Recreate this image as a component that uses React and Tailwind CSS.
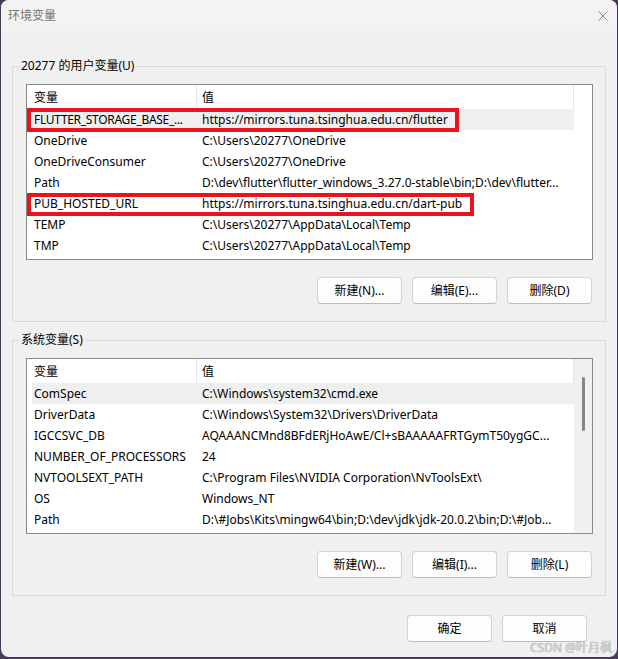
import React from "react";

const userRows = [
  { name: "FLUTTER_STORAGE_BASE_...", value: "https://mirrors.tuna.tsinghua.edu.cn/flutter", hl: true, box: "a", tight: true },
  { name: "OneDrive", value: "C:\\Users\\20277\\OneDrive" },
  { name: "OneDriveConsumer", value: "C:\\Users\\20277\\OneDrive" },
  { name: "Path", value: "D:\\dev\\flutter\\flutter_windows_3.27.0-stable\\bin;D:\\dev\\flutter..." },
  { name: "PUB_HOSTED_URL", value: "https://mirrors.tuna.tsinghua.edu.cn/dart-pub", box: "b" },
  { name: "TEMP", value: "C:\\Users\\20277\\AppData\\Local\\Temp" },
  { name: "TMP", value: "C:\\Users\\20277\\AppData\\Local\\Temp" },
];

const sysRows = [
  { name: "ComSpec", value: "C:\\Windows\\system32\\cmd.exe", hl: true },
  { name: "DriverData", value: "C:\\Windows\\System32\\Drivers\\DriverData" },
  { name: "IGCCSVC_DB", value: "AQAAANCMnd8BFdERjHoAwE/Cl+sBAAAAAFRTGymT50ygGC..." },
  { name: "NUMBER_OF_PROCESSORS", value: "24" },
  { name: "NVTOOLSEXT_PATH", value: "C:\\Program Files\\NVIDIA Corporation\\NvToolsExt\\" },
  { name: "OS", value: "Windows_NT" },
  { name: "Path", value: "D:\\#Jobs\\Kits\\mingw64\\bin;D:\\dev\\jdk\\jdk-20.0.2\\bin;D:\\#Job..." },
];

function Btn({ children }) {
  return (
    <div className="w-[85px] h-[27px] flex items-center justify-center rounded-[4px] border border-[#d3d3d3] border-b-[#bcbcbc] bg-[#fdfdfd] text-black">
      {children}
    </div>
  );
}

function Row({ r }) {
  return (
    <div className="relative h-[21px] pl-[5px] flex">
      <div className={r.hl ? "flex-1 flex items-center pt-px bg-[#efefef]" : "flex-1 flex items-center pt-px"}>
        <div
          className={
            r.tight
              ? "w-[165px] pl-[2px] whitespace-nowrap overflow-hidden tracking-[-0.3px]"
              : "w-[165px] pl-[2px] whitespace-nowrap overflow-hidden"
          }
        >
          {r.name}
        </div>
        <div className="flex-1 pl-[5px] whitespace-nowrap overflow-hidden">{r.value}</div>
      </div>
      {r.box === "a" && (
        <div className="absolute left-0 -top-px w-[432px] h-[24px] border-[4px] border-[#e8131f]" />
      )}
      {r.box === "b" && (
        <div className="absolute left-0 top-0 w-[447px] h-[23px] border-[4px] border-[#e8131f]" />
      )}
    </div>
  );
}

function List({ rows, scrollbar }) {
  return (
    <div className="w-[567px] h-[176px] border border-[#8a8a8a] bg-white flex">
      <div className="w-[547px] flex flex-col">
        <div className="h-[24px] flex shrink-0">
          <div className="w-[169px] pl-[7px] pt-px flex items-center">变量</div>
          <div className="w-px bg-[#e5e5e5]" />
          <div className="flex-1 pl-[5px] pt-px flex items-center">值</div>
          <div className="w-px bg-[#e5e5e5]" />
        </div>
        {rows.map((r, i) => (
          <Row key={i} r={r} />
        ))}
      </div>
      {scrollbar ? (
        <div className="w-[18px] bg-[#f0f0f0] flex flex-col items-center">
          <div className="mt-[18px] h-[54px] w-[3px] rounded-full bg-[#858585]" />
        </div>
      ) : (
        <div className="w-[18px]" />
      )}
    </div>
  );
}

function Group({ label, rows, scrollbar, buttons }) {
  return (
    <div className="relative h-[256px] border border-[#dadada] pt-[17px] pl-[13px] pr-[12px]">
      <div className="absolute left-[6px] -top-[9px] px-[2px] bg-[#f0f0f0] leading-[16px] text-black">
        {label}
      </div>
      <List rows={rows} scrollbar={scrollbar} />
      <div className="mt-[17px] pr-[1px] flex justify-end gap-[10px]">
        {buttons.map((b) => (
          <Btn key={b}>{b}</Btn>
        ))}
      </div>
    </div>
  );
}

export default function App() {
  return (
    <div className="w-[618px] h-[659px] bg-[#463c55] pl-[1px] font-['Noto_Sans','Noto_Sans_CJK_SC',sans-serif] text-[12px] text-black">
      <div className="relative w-[616px] h-[657px] rounded-[8px] bg-[#f0f0f0] overflow-hidden flex flex-col">
        <div className="h-[31px] shrink-0 bg-[#f3f3f3] flex items-center justify-between pl-[7px] pr-[9px]">
          <span className="text-[#737373]">环境变量</span>
          <svg width="10" height="10" viewBox="0 0 10 10">
            <path d="M0.5 0.5 L9.5 9.5 M9.5 0.5 L0.5 9.5" stroke="#8a8a8a" strokeWidth="1" fill="none" />
          </svg>
        </div>
        <div className="px-[11px] pt-[35px] flex flex-col gap-[18px]">
          <Group
            label="20277 的用户变量(U)"
            rows={userRows}
            scrollbar={false}
            buttons={["新建(N)...", "编辑(E)...", "删除(D)"]}
          />
          <Group
            label="系统变量(S)"
            rows={sysRows}
            scrollbar={true}
            buttons={["新建(W)...", "编辑(I)...", "删除(L)"]}
          />
        </div>
        <div className="mt-[19px] pr-[30px] flex justify-end gap-[10px]">
          <Btn>确定</Btn>
          <Btn>取消</Btn>
        </div>
        <div className="absolute right-[5px] bottom-[2px] text-[12px] leading-[14px] text-[#cdcdcd] [text-shadow:0_0_1px_#9a9a9a]">
          CSDN @叶月枫
        </div>
      </div>
    </div>
  );
}
